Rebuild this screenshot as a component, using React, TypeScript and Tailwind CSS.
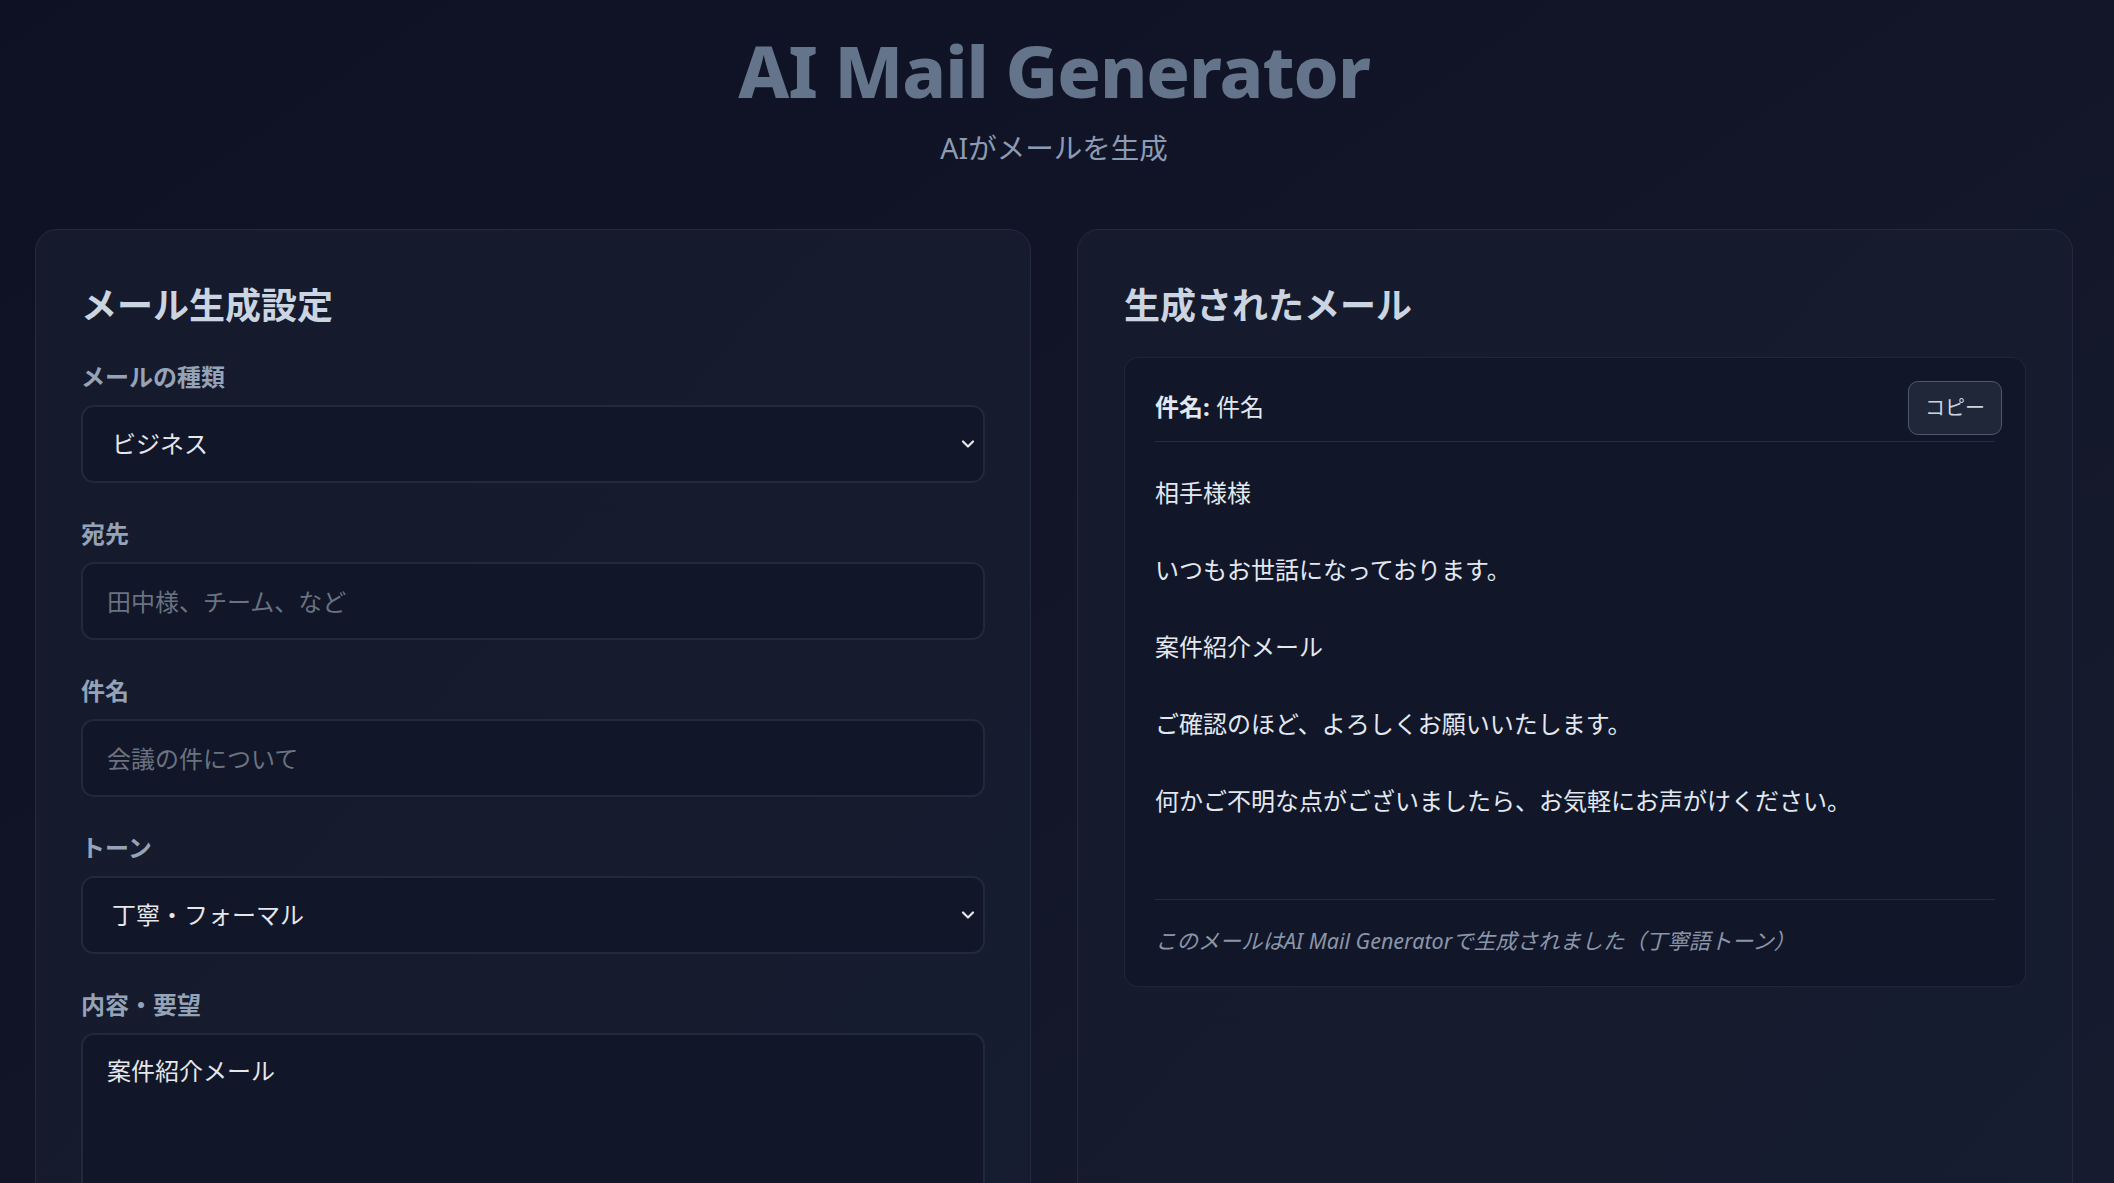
import React, { useState } from 'react';

const FONT = { fontFamily: '"Noto Sans", "Noto Sans CJK JP", sans-serif' };

function Chevron() {
  return (
    <svg
      className="pointer-events-none absolute right-[10px] top-1/2 -translate-y-1/2"
      width="14"
      height="9"
      viewBox="0 0 14 9"
      fill="none"
    >
      <path d="M2 2l5 5 5-5" stroke="#e5e7eb" strokeWidth="2.2" strokeLinecap="round" strokeLinejoin="round" />
    </svg>
  );
}

function Field({ label, children }: { label: string; children: React.ReactNode }) {
  return (
    <div className="mb-[35px]">
      <label className="block text-[24px] leading-[32px] font-bold text-[#94a3b8] mb-[12px]">{label}</label>
      {children}
    </div>
  );
}

const fieldCls =
  "w-full h-[78px] rounded-[13px] border-2 border-[#212a3b] bg-[#111729] px-[24px] text-[24px] text-[#e5e7eb] placeholder:text-[#6b7280] outline-none";

export default function App() {
  const [type, setType] = useState('business');
  const [to, setTo] = useState('');
  const [subject, setSubject] = useState('');
  const [tone, setTone] = useState('formal');
  const [content, setContent] = useState('案件紹介メール');

  const body = `相手様様

いつもお世話になっております。

${content}

ご確認のほど、よろしくお願いいたします。

何かご不明な点がございましたら、お気軽にお声がけください。`;

  return (
    <div style={FONT} className="min-h-screen bg-gradient-to-br from-[#0e1124] via-[#121628] to-[#181d31] pl-[35px] pr-[41px] pt-[30px] pb-[60px]">
      <header className="text-center">
        <h1 className="text-[72px] leading-[80px] font-extrabold tracking-[-1px] text-[#64748b]">AI Mail Generator</h1>
        <p className="mt-[20px] text-[28.5px] leading-[36px] text-[#8b9bb5]">AIがメールを生成</p>
      </header>

      <div className="mt-[63px] grid grid-cols-2 gap-[46px]">
        {/* settings */}
        <section className="rounded-[22px] border border-[#232b3e] bg-gradient-to-br from-[#151a2c] to-[#171d30] px-[45px] pt-[56px] pb-[48px]">
          <h2 className="text-[36px] leading-[40px] font-bold text-[#cbd5e1] mb-[35px]">メール生成設定</h2>

          <Field label="メールの種類">
            <div className="relative">
              <select value={type} onChange={(e) => setType(e.target.value)} className={fieldCls + " appearance-none pl-[29px]"}>
                <option value="business">ビジネス</option>
                <option value="private">プライベート</option>
              </select>
              <Chevron />
            </div>
          </Field>

          <Field label="宛先">
            <input value={to} onChange={(e) => setTo(e.target.value)} placeholder="田中様、チーム、など" className={fieldCls} />
          </Field>

          <Field label="件名">
            <input value={subject} onChange={(e) => setSubject(e.target.value)} placeholder="会議の件について" className={fieldCls} />
          </Field>

          <Field label="トーン">
            <div className="relative">
              <select value={tone} onChange={(e) => setTone(e.target.value)} className={fieldCls + " appearance-none pl-[29px]"}>
                <option value="formal">丁寧・フォーマル</option>
                <option value="casual">カジュアル</option>
              </select>
              <Chevron />
            </div>
          </Field>

          <Field label="内容・要望">
            <textarea
              value={content}
              onChange={(e) => setContent(e.target.value)}
              className="w-full h-[210px] resize-none rounded-[13px] border-2 border-[#212a3b] bg-[#111729] px-[24px] py-[18px] text-[24px] leading-[36px] text-[#e5e7eb] outline-none"
            />
          </Field>

          <button className="w-full h-[78px] rounded-[13px] bg-[#334155] text-[24px] font-bold text-[#e2e8f0]">メールを生成</button>
        </section>

        {/* result */}
        <section className="rounded-[22px] border border-[#232b3e] bg-gradient-to-br from-[#151a2c] to-[#171d30] px-[46px] pt-[56px] pb-[48px]">
          <h2 className="text-[36px] leading-[40px] font-bold text-[#cbd5e1] mb-[31px]">生成されたメール</h2>

          <div className="relative rounded-[14px] border border-[#1f2738] bg-[#111729] px-[30px] pt-[30px] pb-[30px]">
            <button className="absolute top-[23px] right-[23px] h-[54px] w-[94px] rounded-[10px] border border-[#4f596b] bg-[#1f2739] text-[20px] text-[#cbd5e1]">
              コピー
            </button>
            <div className="border-b border-[#232c3d] pb-[14px] mb-[32px] text-[24px] leading-[38.5px] text-[#e2e8f0]">
              <span className="font-bold">件名:</span> {subject || '件名'}
            </div>
            <div className="whitespace-pre-wrap text-[24px] leading-[38.5px] text-[#e2e8f0]">{body}</div>
            <div className="mt-[79px] border-t border-[#232c3d] pt-[26px] text-[21.5px] leading-[30px] italic text-[#8b95a8]">
              このメールはAI Mail Generatorで生成されました（丁寧語トーン）
            </div>
          </div>
        </section>
      </div>
    </div>
  );
}
